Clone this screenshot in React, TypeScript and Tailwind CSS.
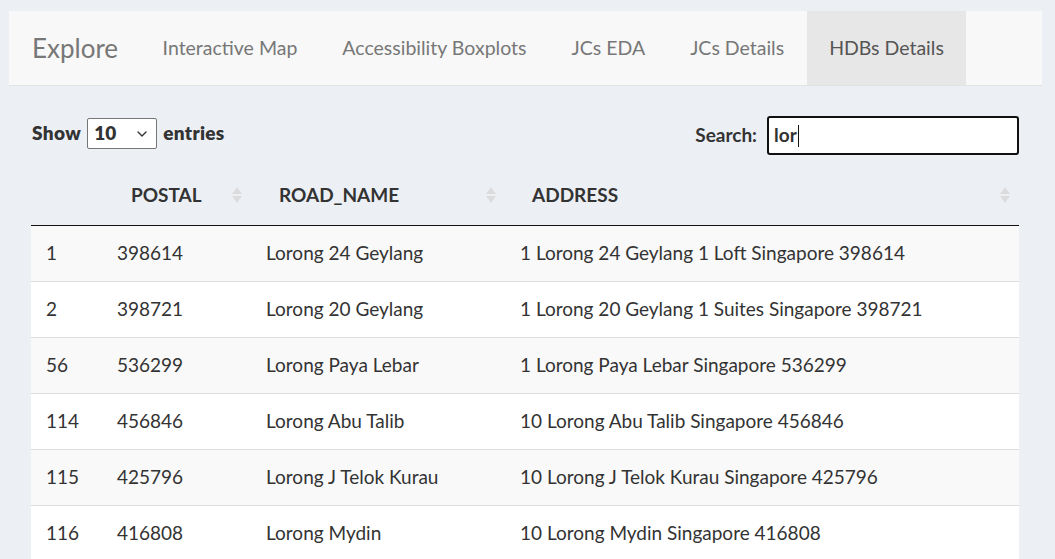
import { ChevronDown } from "lucide-react";

const tabs = ["Interactive Map", "Accessibility Boxplots", "JCs EDA", "JCs Details", "HDBs Details"];

const rows = [
  { id: "1", postal: "398614", road: "Lorong 24 Geylang", address: "1 Lorong 24 Geylang 1 Loft Singapore 398614" },
  { id: "2", postal: "398721", road: "Lorong 20 Geylang", address: "1 Lorong 20 Geylang 1 Suites Singapore 398721" },
  { id: "56", postal: "536299", road: "Lorong Paya Lebar", address: "1 Lorong Paya Lebar Singapore 536299" },
  { id: "114", postal: "456846", road: "Lorong Abu Talib", address: "10 Lorong Abu Talib Singapore 456846" },
  { id: "115", postal: "425796", road: "Lorong J Telok Kurau", address: "10 Lorong J Telok Kurau Singapore 425796" },
  { id: "116", postal: "416808", road: "Lorong Mydin", address: "10 Lorong Mydin Singapore 416808" },
];

function SortIcon() {
  return (
    <svg width="12" height="18" viewBox="0 0 12 18" className="shrink-0">
      <path d="M6 1 L11 8 L1 8 Z" fill="#dcdcdc" />
      <path d="M6 17 L11 10 L1 10 Z" fill="#dcdcdc" />
    </svg>
  );
}

export default function App() {
  return (
    <div
      className="min-h-[559px] bg-[#ecf0f5] pl-[9px] pt-[11px] text-[#333]"
      style={{ fontFamily: "Lato, 'Noto Sans', sans-serif" }}
    >
      {/* Navbar */}
      <nav className="flex h-[75px] w-[1033px] items-stretch border-b border-[#e3e3e3] bg-[#f8f8f8]">
        <div className="flex items-center pl-[23px] pr-[22px] text-[26px] text-[#777]">Explore</div>
        {tabs.map((t) => (
          <div
            key={t}
            className={`flex items-center px-[22.5px] text-[19.5px] ${
              t === "HDBs Details" ? "bg-[#e7e7e7] text-[#555]" : "text-[#777]"
            }`}
          >
            {t}
          </div>
        ))}
      </nav>

      <div className="w-[1010px] pl-[22px] pt-[30px]">
        {/* Controls */}
        <div className="flex items-start justify-between">
          <div className="flex items-center gap-[6px] pl-[1px] pt-[2px] text-[19px] font-extrabold">
            <span className="tracking-[0.4px]">Show</span>
            <div className="relative flex h-[31px] w-[70px] items-center rounded-[2px] border border-[#767676] bg-white pl-[6px]">
              <span>10</span>
              <ChevronDown className="absolute right-[6px] h-4 w-4 text-[#333]" strokeWidth={2} />
            </div>
            <span className="tracking-[0.3px]">entries</span>
          </div>
          <div className="flex items-center gap-[10px] text-[19px] font-bold">
            <span>Search:</span>
            <div className="flex h-[39px] w-[252px] items-center rounded-[3px] border-2 border-[#111] bg-white pl-[5px]">
              <span>lor</span>
              <span className="ml-[1px] h-[22px] w-px bg-[#111]" />
            </div>
          </div>
        </div>

        {/* Table */}
        <table className="mt-[15px] w-full table-fixed border-collapse text-[19px]">
          <thead>
            <tr className="h-[55px] border-b border-[#111] font-bold">
              <th className="w-[71px]" />
              <th className="w-[149px] pb-[5px] pl-[29px] pr-[8px] text-left">
                <div className="flex items-center justify-between">
                  POSTAL
                  <SortIcon />
                </div>
              </th>
              <th className="w-[254px] pb-[5px] pl-[28px] pr-[8px] text-left">
                <div className="flex items-center justify-between">
                  ROAD_NAME
                  <SortIcon />
                </div>
              </th>
              <th className="pb-[5px] pl-[27px] pr-[8px] text-left">
                <div className="flex items-center justify-between">
                  ADDRESS
                  <SortIcon />
                </div>
              </th>
            </tr>
          </thead>
          <tbody>
            {rows.map((r, i) => (
              <tr
                key={r.id}
                className={`h-[56px] border-t border-[#ddd] ${i % 2 === 0 ? "bg-[#f9f9f9]" : "bg-white"}`}
              >
                <td className="pl-[15px]">{r.id}</td>
                <td className="pl-[15px]">{r.postal}</td>
                <td className="pl-[15px]">{r.road}</td>
                <td className="pl-[15px]">{r.address}</td>
              </tr>
            ))}
          </tbody>
        </table>
      </div>
    </div>
  );
}
